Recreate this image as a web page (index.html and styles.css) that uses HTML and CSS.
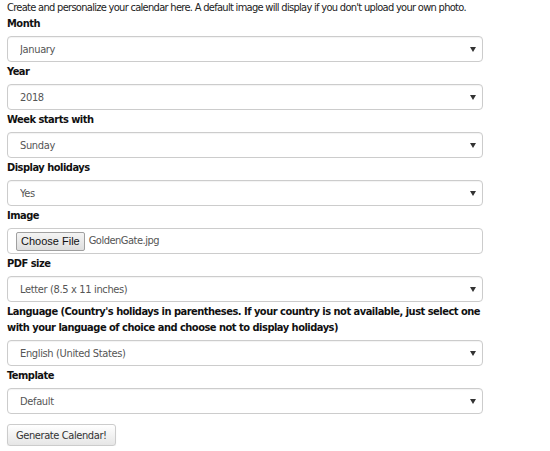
FILE: index.html
```html
<!DOCTYPE html>
<html>
<head>
    <title>Calendar</title>
    <link rel="stylesheet" href="styles.css">
</head>
<body>
    <form class="calendar-form">
        <p class="intro">Create and personalize your calendar here. A default image will display if you don't upload your own photo.</p>

        <div class="form-group">
            <label for="month">Month</label>
            <div class="select-wrap">
                <select id="month">
                    <option>January</option>
                </select>
            </div>
        </div>

        <div class="form-group">
            <label for="year">Year</label>
            <div class="select-wrap">
                <select id="year">
                    <option>2018</option>
                </select>
            </div>
        </div>

        <div class="form-group">
            <label for="weekstart">Week starts with</label>
            <div class="select-wrap">
                <select id="weekstart">
                    <option>Sunday</option>
                </select>
            </div>
        </div>

        <div class="form-group">
            <label for="holidays">Display holidays</label>
            <div class="select-wrap">
                <select id="holidays">
                    <option>Yes</option>
                </select>
            </div>
        </div>

        <div class="form-group">
            <label for="image">Image</label>
            <div class="file-box">
                <button type="button" class="file-btn" id="image">Choose File</button>
                <span class="file-name">GoldenGate.jpg</span>
            </div>
        </div>

        <div class="form-group">
            <label for="pdfsize">PDF size</label>
            <div class="select-wrap">
                <select id="pdfsize">
                    <option>Letter (8.5 x 11 inches)</option>
                </select>
            </div>
        </div>

        <div class="form-group">
            <label for="language">Language (Country's holidays in parentheses. If your country is not available, just select one with your language of choice and choose not to display holidays)</label>
            <div class="select-wrap">
                <select id="language">
                    <option>English (United States)</option>
                </select>
            </div>
        </div>

        <div class="form-group">
            <label for="template">Template</label>
            <div class="select-wrap">
                <select id="template">
                    <option>Default</option>
                </select>
            </div>
        </div>

        <button type="button" class="generate">Generate Calendar!</button>
    </form>
</body>
</html>
```

FILE: styles.css
```css
body {
    font-family: "DejaVu Sans Condensed", "DejaVu Sans", sans-serif;
    font-size: 11px;
    line-height: 16px;
    letter-spacing: -0.5px;
    color: #222;
    margin: 0;
    padding: 0;
    background-color: #fff;
}
.calendar-form {
    width: 476px;
    padding: 0 7px;
}
.intro {
    margin: 0;
    white-space: nowrap;
    letter-spacing: -0.7px;
}
.form-group {
    margin-bottom: 2px;
}
.form-group label {
    display: block;
    font-weight: bold;
    color: #111;
    margin-bottom: 4px;
}
.select-wrap {
    position: relative;
}
.select-wrap::after {
    content: "";
    position: absolute;
    right: 7px;
    top: 11px;
    border-left: 3px solid transparent;
    border-right: 3px solid transparent;
    border-top: 5px solid #333;
    pointer-events: none;
}
.select-wrap select {
    -webkit-appearance: none;
    appearance: none;
    display: block;
    width: 100%;
    height: 26px;
    padding: 0 12px;
    font-family: inherit;
    font-size: 11px;
    letter-spacing: -0.35px;
    color: #555;
    background-color: #fff;
    border: 1px solid #ccc;
    border-radius: 4px;
    box-shadow: inset 0 1px 1px rgba(0, 0, 0, 0.05);
}
.file-box {
    display: flex;
    align-items: center;
    gap: 4px;
    height: 26px;
    box-sizing: border-box;
    padding: 0 8px;
    border: 1px solid #ccc;
    border-radius: 4px;
    color: #555;
}
.file-btn {
    font-family: "Liberation Sans", Arial, sans-serif;
    font-size: 11px;
    letter-spacing: 0;
    height: 19px;
    padding: 0 4px;
    color: #111;
    background: linear-gradient(#f4f4f4, #dedede);
    border: 1px solid #a0a0a0;
    border-radius: 2px;
}
.generate {
    margin-top: 8px;
    height: 22px;
    padding: 0 8px;
    font-family: inherit;
    font-size: 11px;
    letter-spacing: -0.4px;
    color: #333;
    background: linear-gradient(#fff, #e6e6e6);
    border: 1px solid #ccc;
    border-radius: 3px;
    box-shadow: 0 1px 1px rgba(0, 0, 0, 0.08);
}
```
